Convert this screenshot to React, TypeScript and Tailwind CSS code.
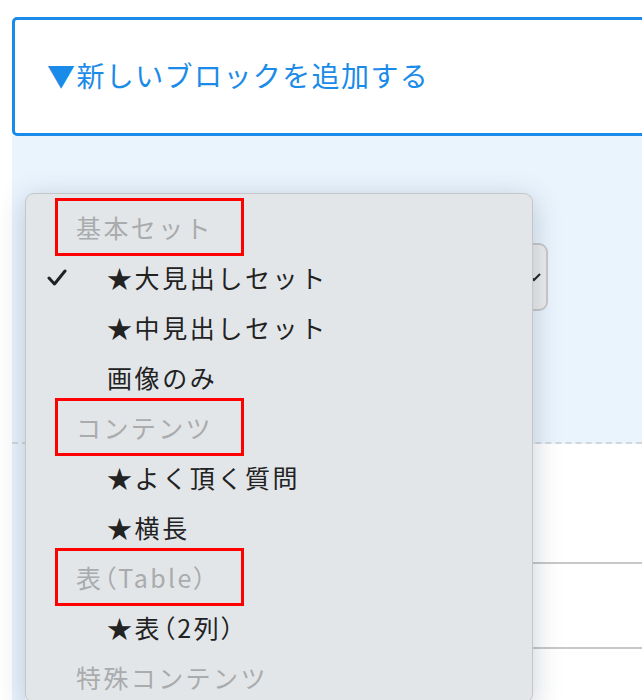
import React from 'react';

type Item = { label: string; group?: boolean; checked?: boolean; boxed?: boolean; palt?: boolean };

const items: Item[] = [
  { label: '基本セット', group: true, boxed: true },
  { label: '★大見出しセット', checked: true },
  { label: '★中見出しセット' },
  { label: '画像のみ' },
  { label: 'コンテンツ', group: true, boxed: true },
  { label: '★よく頂く質問' },
  { label: '★横長' },
  { label: '表（Table）', group: true, boxed: true, palt: true },
  { label: '★表（2列）', palt: true },
  { label: '特殊コンテンツ', group: true },
];

const font = { fontFamily: '"Noto Sans CJK JP", "Noto Sans", sans-serif' };

export default function App() {
  return (
    <div className="relative h-[700px] overflow-hidden bg-white" style={font}>
      <div className="pl-3 pt-[17px]">
        {/* header */}
        <div className="-mr-4 flex h-[119px] items-center rounded-l-[5px] border-[3px] border-[#1a8be8] bg-white pb-[3px] pl-[32px]">
          <span className="text-[28px] leading-none tracking-[1.4px] text-[#1a8be8]">▼新しいブロックを追加する</span>
        </div>

        {/* panel */}
        <div className="bg-[#eaf4fd]">
          <div className="h-[308px] border-b-2 border-dashed border-[#d4d7da] pt-[107px] pl-[40px]">
            <div className="flex h-[68px] w-[496px] items-center justify-end rounded-[9px] border-2 border-[#c9c9c9] bg-[#ececec] pr-[4px]">
              <svg width="16" height="16" viewBox="0 0 16 16" className="text-[#222]">
                <path d="M2 5 L8 11 L14 5" fill="none" stroke="currentColor" strokeWidth="2" />
              </svg>
            </div>
          </div>
          <div className="pl-[13px]">
            <div className="h-[120px] border-b-2 border-[#c8c8c8] bg-white" />
            <div className="h-[85px] border-b-2 border-[#c8c8c8] bg-white" />
            <div className="h-[120px] bg-white" />
          </div>
        </div>
      </div>

      {/* dropdown menu */}
      <div className="absolute left-[25px] top-[193px] w-[508px] rounded-[9px] border border-[#c4c6c8] bg-[#e3e6e9] pt-[8px] shadow-[0_6px_28px_rgba(40,60,90,0.25)]">
        {items.map((it, i) => (
          <div key={i} className="relative flex h-[50px] items-center">
            {it.checked && (
              <svg width="20" height="18" viewBox="0 0 20 18" className="absolute left-[21px] top-[17px] text-[#222]">
                <path d="M2 9 L7.5 15 L18 2" fill="none" stroke="currentColor" strokeWidth="3" strokeLinecap="round" strokeLinejoin="round" />
              </svg>
            )}
            <span
              className={
                it.group
                  ? 'pl-[50px] text-[25px] leading-none tracking-[2.4px] text-[#a9abad]'
                  : 'pl-[81px] text-[25px] leading-none tracking-[2.6px] text-[#222]'
              }
              style={it.palt ? { fontFeatureSettings: '"palt"' } : undefined}
            >
              {it.label}
            </span>
            {it.boxed && (
              <div className="absolute left-[29px] top-[-4px] h-[58px] w-[189px] border-[3px] border-[#ff0000]" />
            )}
          </div>
        ))}
      </div>
    </div>
  );
}
